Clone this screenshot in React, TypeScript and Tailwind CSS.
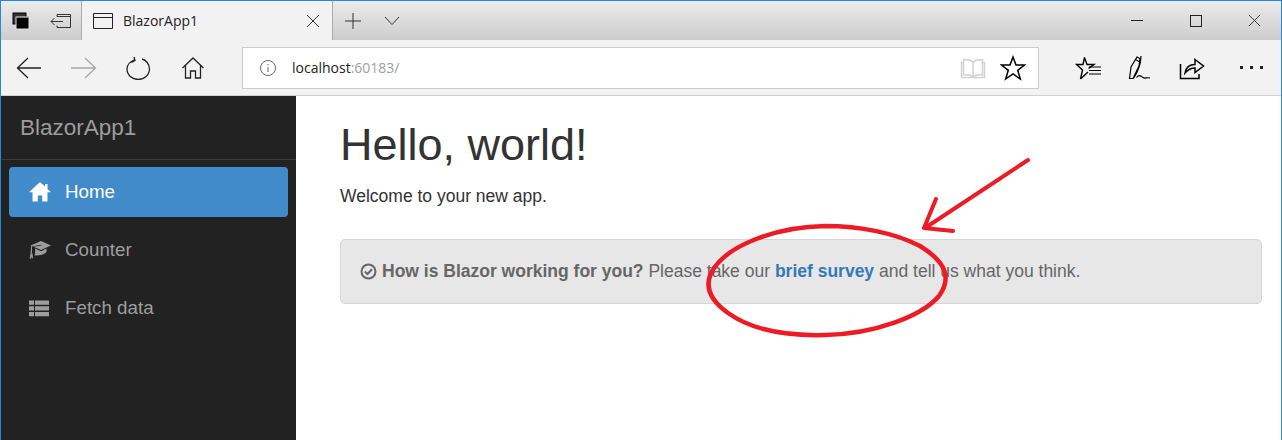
const chrome = { fill: "none", stroke: "currentColor", strokeWidth: 1 };

const TabsAsideIcon = () => (
    <svg width="20" height="20" viewBox="0 0 20 20" className="text-black">
        <rect x="2" y="2" width="13" height="11" fill="#333" stroke="#000" />
        <rect x="5" y="6" width="13" height="12" fill="#000" stroke="#e0e0e0" strokeWidth="1" />
        <path d="M5 6h13" stroke="#999" />
    </svg>
);

const SetAsideIcon = () => (
    <svg width="22" height="16" viewBox="0 0 22 16" className="text-[#333]">
        <path d="M7 3.5V1.5H20.5V14.5H7V12.5M7 3.5H20.5M1 8.5H13M4.5 5L1 8.5L4.5 12" {...chrome} />
    </svg>
);

const PageIcon = () => (
    <svg width="22" height="18" viewBox="0 0 22 18" className="text-[#222]">
        <path d="M1.5 1.5H20.5V16.5H1.5ZM1.5 5.5H20.5" {...chrome} />
    </svg>
);

const X = ({ size = 14 }: { size?: number }) => (
    <svg width={size} height={size} viewBox="0 0 14 14" className="text-[#333]">
        <path d="M1 1L13 13M13 1L1 13" {...chrome} />
    </svg>
);

const Nav = ({ d, w = 26, h = 24, color = "text-[#222]", sw = 1.3 }: { d: string; w?: number; h?: number; color?: string; sw?: number }) => (
    <svg width={w} height={h} viewBox={`0 0 ${w} ${h}`} className={color}>
        <path d={d} fill="none" stroke="currentColor" strokeWidth={sw} />
    </svg>
);

const InfoIcon = () => (
    <svg width="18" height="18" viewBox="0 0 18 18" className="text-[#666]">
        <circle cx="9" cy="9" r="7.5" {...chrome} />
        <path d="M9 8V13M9 5V6.3" {...chrome} />
    </svg>
);

const HomeGlyph = () => (
    <svg width="22" height="20" viewBox="0 0 22 20" fill="currentColor">
        <path d="M11 0L16 4.6V2H18.5V6.9L22 10.2H18.5V19.5H13.2V13.5H8.8V19.5H3.5V10.2H0Z" />
    </svg>
);

const CapGlyph = () => (
    <svg width="22" height="20" viewBox="0 0 22 20" fill="currentColor">
        <path d="M12 1L22 5.5L12 10L4.5 6.8L12.5 5.6L12 4.8L3 6.4V13.5L1.5 13.5L2.2 6.2L1.5 5.5Z" />
        <path d="M6 8.5L12 11.2L17.5 8.5V12C15 15 9 15.5 5.5 15.5C6.5 13.5 6.2 10.5 6 8.5Z" />
        <path d="M1.5 13.5H3.5L4 17.5L3 19L2.5 16.5L1.5 19.5L0.8 18Z" />
    </svg>
);

const ListGlyph = () => (
    <svg width="20" height="17" viewBox="0 0 20 17" fill="currentColor">
        <path d="M0 0.5H5V4.7H0ZM6 0.5H20V4.7H6ZM0 6.3H5V10.5H0ZM6 6.3H20V10.5H6ZM0 12.1H5V16.3H0ZM6 12.1H20V16.3H6Z" />
    </svg>
);

const CheckGlyph = () => (
    <svg width="17" height="17" viewBox="0 0 17 17" fill="none" stroke="currentColor" className="mr-[5px]">
        <circle cx="8.5" cy="8.5" r="7" strokeWidth="2" />
        <path d="M4.8 8.6L7.5 11L12 6.3" strokeWidth="2" />
    </svg>
);

const ToolbarIcons = () => (
    <div className="flex items-center ml-[36px] gap-[27px] text-black">
        <svg width="26" height="26" viewBox="0 0 26 26">
            <path d="M9.5 2.5L12 9.5H19L13.5 13.5M5.5 24L7.5 15L1.5 9.5H8L9.5 2.5M5.5 24L13 17" fill="none" stroke="#000" strokeWidth="1.4" />
            <path d="M14 12H26M14 15.5H26M14 19H26" stroke="#000" strokeWidth="1.2" />
        </svg>
        <svg width="24" height="26" viewBox="0 0 24 26">
            <path d="M1.5 23.5L3 12L9 2L12 3.5L11 11L5 23.5ZM7.5 4.5L11 6.5M13 1C13 9 9 18 5.5 23.5M8.5 22.5C11 19 13 21 15 22.5C17 24 19 22 22 23" fill="none" stroke="#000" strokeWidth="1.2" />
        </svg>
        <svg width="26" height="24" viewBox="0 0 26 24">
            <path d="M1.5 8V22.5H20V18M6 17C7 11 11 8.5 16 8.5V3.5L24.5 10L16 16.5V12C12 12 9 13.5 6 17Z" fill="none" stroke="#000" strokeWidth="1.5" />
        </svg>
        <div className="flex gap-[7px] ml-[8px]">
            <div className="w-[3px] h-[3px] bg-[#222]" />
            <div className="w-[3px] h-[3px] bg-[#222]" />
            <div className="w-[3px] h-[3px] bg-[#222]" />
        </div>
    </div>
);

const Annotation = () => (
    <svg width="1282" height="440" viewBox="0 0 1282 440" className="absolute left-0 top-0 pointer-events-none">
        <g fill="none" stroke="#ed1c24" strokeLinecap="round" strokeLinejoin="round">
            <path strokeWidth="4" d="M1028 160L925 228M936 199L924 228L953 231" />
            <path strokeWidth="4.5" d="M825 226C775 227 730 245 714 268C704 283 707 298 728 313C753 331 790 336 825 335C875 334 922 316 939 296C952 278 946 262 920 246C895 233 860 226 825 226Z" />
        </g>
    </svg>
);

export default function App() {
    return (
        <div className="relative w-[1282px] h-[440px] overflow-hidden bg-white font-['Liberation_Sans',sans-serif]">
            <div className="h-full flex flex-col border-x border-t border-[#2b88d8]">
                <div className="h-[39px] flex bg-gradient-to-b from-[#ebebeb] to-[#cdcdcd] font-['Open_Sans',sans-serif]">
                    <div className="w-[81px] flex items-center border-r border-[#aaa]">
                        <div className="ml-[10px]"><TabsAsideIcon /></div>
                        <div className="ml-[19px]"><SetAsideIcon /></div>
                    </div>
                    <div className="w-[251px] flex items-center bg-[#f2f2f2] border-r border-[#aaa]">
                        <div className="ml-[10px]"><PageIcon /></div>
                        <span className="ml-[9px] text-[14px] text-[#222]">BlazorApp1</span>
                        <div className="ml-auto mr-[12px]"><X /></div>
                    </div>
                    <div className="flex items-center ml-[11px] text-[#333]">
                        <svg width="18" height="18" viewBox="0 0 18 18"><path d="M9 1V17M1 9H17" {...chrome} /></svg>
                        <svg width="16" height="10" viewBox="0 0 16 10" className="ml-[22px]"><path d="M1 1L8 8.5L15 1" {...chrome} /></svg>
                    </div>
                    <div className="ml-auto flex items-center text-[#222]">
                        <div className="w-[12px] h-px bg-[#222]" />
                        <div className="w-[12px] h-[12px] border border-[#222] ml-[47px]" />
                        <div className="ml-[46px] mr-[20px]"><X size={13} /></div>
                    </div>
                </div>

                <div className="h-[56px] flex items-center bg-[#f2f2f2] border-b border-[#d0d0d0]">
                    <div className="flex items-center ml-[15px]">
                        <Nav d="M1 12H25M12 2L1.5 12L12 22" />
                        <div className="ml-[29px]"><Nav d="M0 12H24M14 2L24.5 12L14 22" color="text-[#a6a6a6]" /></div>
                        <div className="ml-[29px]"><Nav d="M9 3.5C3 6 1 10 1 13C1 19 6 23.5 12.5 23.5C18 23.5 23.5 19 23.5 13C23.5 8 20 4 16 3M8 1L9 4.5L5.5 6.5" /></div>
                        <div className="ml-[29px]"><Nav d="M1.5 12L12 2L22.5 12M4.5 9.5V22H9.5V15H14.5V22H19.5V9.5" /></div>
                    </div>
                    <div className="ml-[35px] w-[797px] h-[42px] bg-white border border-[#ccc] flex items-center">
                        <div className="ml-[16px]"><InfoIcon /></div>
                        <span className="ml-[15px] text-[14px] text-[#222] font-['Open_Sans',sans-serif]">
                            localhost<span className="text-[#a0a0a0]">:60183/</span>
                        </span>
                        <div className="ml-auto flex items-center mr-[12px]">
                            <svg width="26" height="22" viewBox="0 0 26 22" className="mr-[14px]">
                                <path d="M13 5C11 3 7 2.5 3.5 3V18C7 17.5 11 18 13 20C15 18 19 17.5 22.5 18V3C19 2.5 15 3 13 5ZM13 5V20M3.5 5.5H1.5V20.5H24.5V5.5H22.5" fill="none" stroke="#d2d2d2" strokeWidth="1.5" />
                            </svg>
                            <svg width="26" height="26" viewBox="0 0 26 26">
                                <path d="M13 2L16 10H24.5L17.7 15.3L20.3 24L13 19L5.7 24L8.3 15.3L1.5 10H10Z" fill="none" stroke="#000" strokeWidth="1.5" />
                            </svg>
                        </div>
                    </div>
                    <ToolbarIcons />
                </div>

                <div className="flex-1 flex">
                    <div className="w-[295px] bg-[#222222]">
                        <div className="h-[64px] flex items-center pl-[19px] border-b border-[#3c3c3c]">
                            <span className="text-[22.5px] text-[#9d9d9d]">BlazorApp1</span>
                        </div>
                        <div className="pl-[8px] pr-[8px] pt-[7px] flex flex-col gap-[8px] text-[18.75px]">
                            <div className="h-[50px] rounded-[4px] bg-[#428bca] text-white flex items-center pl-[20px]">
                                <HomeGlyph />
                                <span className="ml-[14px]">Home</span>
                            </div>
                            <div className="h-[50px] text-[#9d9d9d] flex items-center pl-[20px]">
                                <CapGlyph />
                                <span className="ml-[14px]">Counter</span>
                            </div>
                            <div className="h-[50px] text-[#9d9d9d] flex items-center pl-[20px]">
                                <ListGlyph />
                                <span className="ml-[16px]">Fetch data</span>
                            </div>
                        </div>
                    </div>

                    <div className="flex-1 pl-[44px] pr-[19px] pt-[24px] text-[#333]">
                        <h1 className="text-[45px] leading-[50px]">Hello, world!</h1>
                        <p className="text-[17.5px] leading-[25px] mt-[14px]">Welcome to your new app.</p>
                        <div className="mt-[30px] h-[65px] flex items-center rounded-[5px] border border-[#d6d6d6] bg-[#e7e7e7] pl-[19px] text-[17.5px] text-[#666]">
                            <CheckGlyph />
                            <span>
                                <b>How is Blazor working for you?</b> Please take our{" "}
                                <b className="text-[#337ab7]">brief survey</b> and tell us what you think.
                            </span>
                        </div>
                    </div>
                </div>
            </div>
            <Annotation />
        </div>
    );
}
